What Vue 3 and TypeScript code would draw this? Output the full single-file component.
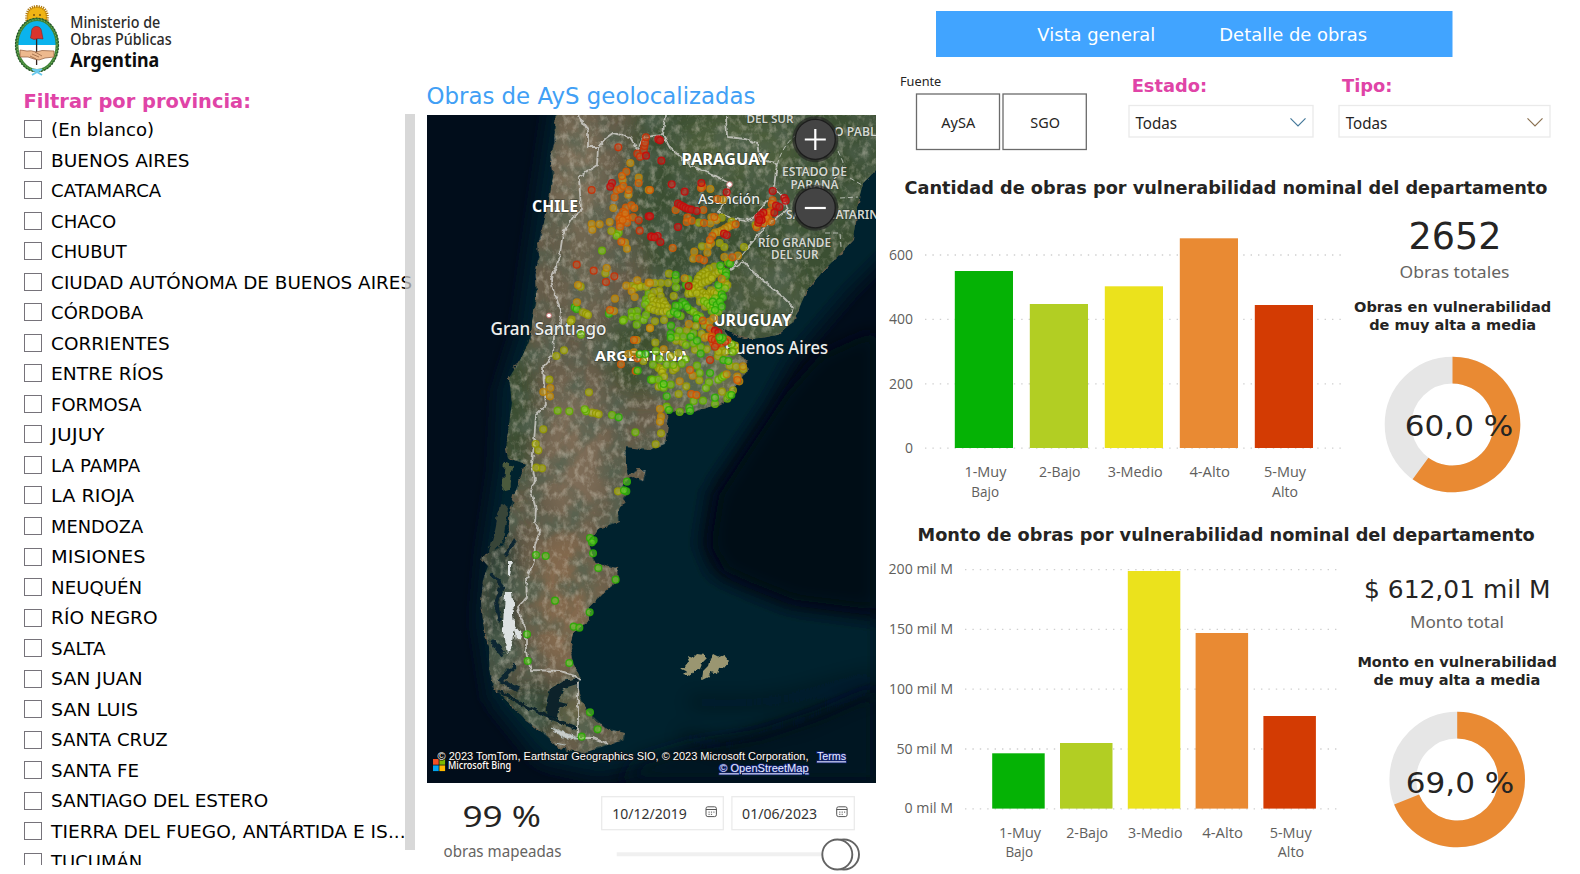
<script setup lang="ts">
import { h, type FunctionalComponent } from 'vue'

interface LabelProps { x: number; y: number; w: number; size: number }

// A single line of SVG text fitted to a known width.
const Label: FunctionalComponent<LabelProps> = (p, { slots }) =>
  h('text', { x: p.x, y: p.y, textLength: p.w, lengthAdjust: 'spacingAndGlyphs', 'font-size': p.size }, slots.default?.())
Label.props = ['x', 'y', 'w', 'size']

const provinces: { name: string; w: number }[] = [
  { name: '(En blanco)', w: 103 }, { name: 'BUENOS AIRES', w: 138.5 }, { name: 'CATAMARCA', w: 110 },
  { name: 'CHACO', w: 65 }, { name: 'CHUBUT', w: 75.5 }, { name: 'CIUDAD AUTÓNOMA DE BUENOS AIRES', w: 361 },
  { name: 'CÓRDOBA', w: 92 }, { name: 'CORRIENTES', w: 118.5 }, { name: 'ENTRE RÍOS', w: 112.5 },
  { name: 'FORMOSA', w: 90.5 }, { name: 'JUJUY', w: 53.5 }, { name: 'LA PAMPA', w: 89 }, { name: 'LA RIOJA', w: 83 },
  { name: 'MENDOZA', w: 92 }, { name: 'MISIONES', w: 94.5 }, { name: 'NEUQUÉN', w: 91 }, { name: 'RÍO NEGRO', w: 106.5 },
  { name: 'SALTA', w: 54.5 }, { name: 'SAN JUAN', w: 91.5 }, { name: 'SAN LUIS', w: 87 }, { name: 'SANTA CRUZ', w: 116.5 },
  { name: 'SANTA FE', w: 88 }, { name: 'SANTIAGO DEL ESTERO', w: 217 },
  { name: 'TIERRA DEL FUEGO, ANTÁRTIDA E IS...', w: 354.5 }, { name: 'TUCUMÁN', w: 91 },
]

type Tone = 'r' | 'v' | 'o' | 'a' | 'y' | 'l' | 'g'
interface Dot { x: number; y: number; tone: Tone }

// Each sector stores positions in thirds of a pixel from its origin, grouped by tone.
function sector(ox: number, oy: number, groups: Partial<Record<Tone, string>>): Dot[] {
  return (Object.keys(groups) as Tone[]).flatMap((tone) =>
    groups[tone]!.split(' ').map((pair) => {
      const [x, y] = pair.split(',').map(Number)
      return { x: ox + x / 3, y: oy + y / 3, tone }
    }),
  )
}

const dots: Dot[] = [
  ...sector(426, 110, {
    l: '578,368 572,377 528,422 668,551 660,568 668,575 657,583 668,598 633,603 617,606 617,620 633,620 594,629 591,632 653,630 632,644 660,615 465,674',
    g: '446,592 452,597 549,611',
    y: '556,363 538,490 464,530 617,528 638,525 627,533 643,530 660,530 470,607 480,611 486,615 437,629 434,634',
    a: '590,210 613,159 638,203 607,254 668,240 562,294 551,336 521,343 497,342 499,359 597,398 603,416 542,474 456,525 601,527 634,511 617,544 626,561 668,518 567,566 453,577 564,603 672,654',
    o: '601,185 588,198 638,219 572,241 583,237 592,228 608,240 566,262 600,293 616,286 625,294 592,305 585,318 597,320 605,325 621,322 603,338 580,326 582,340 582,350 586,395 552,600 590,330 598,310',
    v: '577,112 634,131 642,140 653,121 655,108 497,240 638,331 641,362 452,464 503,482 565,499 540,516 657,98 660,82',
    r: '660,137 558,219 553,230 668,319 675,380',
  }),
  ...sector(650, 110, {
    y: '147,338 215,323 245,335 156,409 209,399 223,411 282,411 317,345 193,470 178,476 167,484 158,490 150,497 144,506 165,500 175,495 185,500 195,492 205,485 225,515 232,525 140,517 133,526 126,535 118,541 115,551 125,550 135,540 145,530 155,520 165,515 175,512 185,505 150,541 158,548 168,552 177,550 183,541 192,547 200,550 178,565 168,562 150,560 140,550 165,590 150,575 57,491 54,519 33,519 15,519 28,542 12,546 32,558 5,560 10,570 20,575 30,578 40,573 45,583 52,592 35,590 22,588 8,585 0,595 12,600 25,604 38,605 50,603 71,558 42,630 15,634 137,648 110,662 165,645 155,672',
    l: '234,456 215,480 208,535 225,535 207,565 195,565 162,573 172,580 180,588 190,590 185,603 205,605 77,510 115,508 78,532 120,600 130,605 60,612 92,618 88,663 130,670 140,615 150,620',
    g: '240,461 211,467 228,486 228,497 205,525 215,553 219,562 188,575 200,585 210,575 215,590 195,600 77,495 108,525 97,576 105,583 88,588 77,587 112,592 72,605 82,612 63,647 62,672 140,625',
    a: '181,237 219,269 184,322 200,330 181,340 245,346 235,350 225,356 215,362 205,366 195,368 183,400 175,408 172,428 133,425 130,446 223,441 264,437 350,333 352,310 215,507 0,519 104,505 117,642 178,635 190,625 0,655',
    o: '157,230 153,234 202,267 0,240 77,300 160,300 112,323 110,336 125,332 162,339 193,321 257,343 187,378 180,390 68,414 148,446 162,451 247,442 368,271 365,282 345,312 355,318 349,325 340,340 364,335 320,352 360,305 158,632 180,655 190,668',
    r: '25,88 30,91 34,152 65,223 104,245 154,219 230,247 84,281 92,286 100,290 107,294 115,297 124,299 140,303 84,351 222,371 230,375 5,380 23,378 14,382 31,396 368,243 403,264 407,272 378,287 388,291 373,308 340,308 332,315 325,322 335,330 325,338 328,330 0,319 116,528 195,662 205,668',
  }),
  ...sector(426, 335, {
    y: '414,46 391,63 370,134 489,172 498,233 510,235 518,238 352,283 329,327 337,346 348,400 331,398 576,469 652,78',
    a: '373,159 352,171 372,184 632,15 607,57 624,52',
    o: '624,15 634,70 585,88 629,108',
    l: '395,227 430,229 480,229 476,223 558,240 628,292',
    g: '578,247 603,440 601,469 594,466 492,609 503,616 498,622 501,655 330,660 359,663 641,58 658,57 635,107 675,134',
  }),
  ...sector(650, 335, {
    y: '16,23 62,64 79,17 98,22 85,54 69,106 77,100 25,98 30,102 38,103 36,112 42,125 26,155 135,44 170,43 148,136 109,154 86,177 239,92 258,95 280,103 204,64 216,170 249,166 215,45 225,52 255,45 255,32 33,295 17,328 205,50',
    l: '80,5 100,5 18,48 108,30 29,72 107,73 95,86 50,89 70,90 9,89 8,134 26,134 35,152 62,149 41,158 130,25 152,36 141,92 149,114 177,142 168,159 131,198 159,197 195,207 50,215 89,231 205,134 216,127 222,122 232,191 238,180 245,28 248,50',
    g: '62,8 122,5 141,17 152,56 180,114 41,147 50,184 195,188 57,225 118,218 120,228 220,75 235,78 244,180',
    a: '41,43 128,122 89,139 230,118 279,94 262,125 268,139 30,222 33,245 30,260 165,8 175,5',
    o: '120,105 124,177 139,180 262,135 190,25 232,15 212,25 185,5',
    v: '180,75 185,12 195,15 205,18 200,28 225,20 195,35',
  }),
  ...sector(658, 338, { g: '188,6 194,0 184,-2' }),
  ...sector(426, 560, { g: '517,24 569,59 387,122 491,157 443,200 460,203 303,223 305,303 430,309 492,457 515,508 467,530' }),
]

interface Tick { text: string; y: number; x: number; w: number }
interface Bar { x: number; top: number; color: string }
interface Caption { text: string; x: number; y: number; w: number }
const tones = ['#05b205', '#b2ce23', '#ebe21c', '#e98a33', '#d33b03']

const countTicks: Tick[] = [
  { text: '600', y: 255, x: 889, w: 24 }, { text: '400', y: 319.4, x: 889, w: 24 },
  { text: '200', y: 383.8, x: 889, w: 24 }, { text: '0', y: 448.2, x: 905, w: 8 },
]
const countBars: Bar[] = [271, 304, 286.3, 238.3, 305].map((top, i) => ({ x: 954.8 + i * 75, top, color: tones[i] }))
const countCaptions: Caption[] = [
  { text: '1-Muy', x: 964.4, y: 477, w: 42 }, { text: 'Bajo', x: 971.3, y: 497, w: 27.7 },
  { text: '2-Bajo', x: 1039, y: 477, w: 41.5 }, { text: '3-Medio', x: 1107.7, y: 477, w: 55 },
  { text: '4-Alto', x: 1189.4, y: 477, w: 40.5 }, { text: '5-Muy', x: 1264, y: 477, w: 42 }, { text: 'Alto', x: 1272, y: 497, w: 26 },
]
const amountTicks: Tick[] = [
  { text: '200 mil M', y: 569.6, x: 888.5, w: 64.5 }, { text: '150 mil M', y: 629.4, x: 889, w: 64 },
  { text: '100 mil M', y: 689.2, x: 889, w: 64 }, { text: '50 mil M', y: 749, x: 896.5, w: 56.5 }, { text: '0 mil M', y: 808.8, x: 904.5, w: 48.5 },
]
const amountBars: Bar[] = [753.3, 743, 571, 633, 716].map((top, i) => ({ x: 992.2 + i * 67.8, top, color: tones[i] }))
const amountCaptions: Caption[] = [
  { text: '1-Muy', x: 999, y: 838, w: 42 }, { text: 'Bajo', x: 1005.4, y: 857, w: 27.7 },
  { text: '2-Bajo', x: 1066.2, y: 838, w: 42 }, { text: '3-Medio', x: 1128, y: 838, w: 54.5 },
  { text: '4-Alto', x: 1202.3, y: 838, w: 40.7 }, { text: '5-Muy', x: 1269.7, y: 838, w: 42 }, { text: 'Alto', x: 1277.8, y: 857, w: 26.3 },
]

// Ring segment from the top, clockwise, for a share between 0 and 1.
function arc(cx: number, cy: number, share: number, ro = 67.8, ri = 41): string {
  const a = share * Math.PI * 2
  const s = Math.sin(a)
  const c = -Math.cos(a)
  const big = share > 0.5 ? 1 : 0
  return `M${cx} ${cy - ro}A${ro} ${ro} 0 ${big} 1 ${cx + ro * s} ${cy + ro * c}L${cx + ri * s} ${cy + ri * c}A${ri} ${ri} 0 ${big} 0 ${cx} ${cy - ri}Z`
}

const land = 'M556 110L554 143L550 157L553 177L549 200L544 223L538 243L539 257L535 273L536 297L532 323L531 335L523 355L509 378L512 402L509 425L506 448L508 458L517 461L526 464L520 480L514 495L509 515L510 530L503 545L481 558L488 566L483 580L481 603L484 627L489 647L489 670L494 688L509 703L526 720L543 733L559 748L583 753L608 745L624 740L625 733L606 728L589 713L581 700L577 685L581 679L573 663L570 647L573 633L589 620L589 607L603 593L618 582L617 568L596 563L593 558L589 542L599 528L619 522L618 512L626 495L623 484L633 478L644 482L646 470L638 470L628 475L626 465L626 447L650 450L665 444L668 425L667 413L690 412L717 405L732 397L735 387L747 371L746 362L738 352L730 338L722 328L738 335L753 339L777 335L793 322L807 290L823 271L837 257L853 240L857 207L863 183L876 170L890 110Z'
const borders = [
  'M578 115L588 130L588 147L598 147L597 165L579 177L581 210L573 217L563 233L559 260L551 280L554 293L561 310L560 325L554 336L553 355L543 367L544 385L546 405L536 415L534 442L532 465L535 480L531 490L536 510L535 522L540 532L535 545L534 562L526 580L527 597L518 607L520 617L526 628L526 650L527 657L531 670L560 671L575 676L581 680',
  'M578 683L578 738L593 738L608 744',
  'M598 147L606 138L613 133L630 137L638 150L643 137L663 135L670 148L690 165L713 175L729 183L728 197L718 212L730 218L745 221L755 217L767 200',
  'M665 115L663 135', 'M726 115L727 137L745 139L757 143L760 160L777 163L774 187L783 197L787 210L764 228L740 257L730 270L744 262L756 275L783 297L793 307L790 318',
]
</script>

<template>
  <main class="dashboard">
    <aside class="side">
      <svg class="brand" width="427" height="114" viewBox="0 0 427 114">
        <g class="crest">
          <path d="M27 22Q25 7 37 6.5Q49 7 47 22Z" fill="#f0b414" />
          <path d="M27 21Q25 7 37 6.5Q49 7 47 21" fill="none" stroke="#ac7815" stroke-width="3" stroke-dasharray="1.2 1" />
          <circle cx="34" cy="15" r="1" fill="#76520f" /><circle cx="40" cy="15" r="1" fill="#76520f" />
          <ellipse cx="37" cy="45" rx="20.3" ry="26" fill="#fff" />
          <path d="M17 45A20 26 0 0 1 57 45Z" fill="#0bb3ed" />
          <ellipse cx="37" cy="45" rx="20.2" ry="25.6" fill="none" stroke="#3f8438" stroke-width="3.2" />
          <ellipse cx="37" cy="45" rx="21.5" ry="26.8" fill="none" stroke="#27512a" stroke-width="1.2" stroke-dasharray="1.8 1.4" />
          <ellipse cx="37" cy="45" rx="20" ry="25.4" fill="none" stroke="#8db95c" stroke-width="1" stroke-dasharray="1 2" />
          <path d="M36.6 37V65" stroke="#33211c" stroke-width="1.3" />
          <path d="M30.5 38L31.5 33Q31 27 36 26.4Q41 26.6 41.5 31L43 39L38 38.5L34 39.5Z" fill="#d9342c" stroke="#8f1c1b" stroke-width=".6" />
          <path d="M20 50L27 51Q31 50 36 52L42 50.5L54 51L54 57L45 58L39 60L34 59L28 57L20 57Z" fill="#edb98e" stroke="#8c5836" stroke-width=".7" />
          <path d="M32 54L39 57M35 52L42 56M30 56L36 59" stroke="#7b492b" stroke-width=".6" fill="none" />
          <path d="M32 69L42 75M42 69L32 75M33 70H41" stroke="#69c9ee" stroke-width="1.8" fill="none" />
        </g>
        <Label class="brand-text" :x="70.3" :y="28" :w="90" :size="16.4">Ministerio de</Label>
        <Label class="brand-text" :x="70.3" :y="45" :w="101.3" :size="16.4">Obras Públicas</Label>
        <Label class="brand-strong" :x="70.3" :y="66.7" :w="89" :size="19.5">Argentina</Label>
        <Label class="pink" :x="23.5" :y="107.7" :w="227.5" :size="20">Filtrar por provincia:</Label>
      </svg>
      <div class="list">
        <label v-for="p in provinces" :key="p.name" class="row">
          <span class="box"></span>
          <svg class="row-text" width="366" height="30" viewBox="0 0 366 30">
            <Label :x="-0.9" :y="21.7" :w="p.w" :size="17">{{ p.name }}</Label>
          </svg>
        </label>
        <span class="scrollbar"></span>
      </div>
    </aside>

    <section class="center">
      <svg class="map-title" width="449" height="115" viewBox="427 0 449 115">
        <Label class="blue" :x="426.5" :y="103.8" :w="329" :size="22.3">Obras de AyS geolocalizadas</Label>
      </svg>
      <svg class="map" width="449" height="668" viewBox="427 115 449 668">
        <defs>
          <clipPath id="landClip"><path :d="land" /></clipPath>
          <filter id="soft" x="-30%" y="-30%" width="160%" height="160%"><feGaussianBlur stdDeviation="11" /></filter>
          <filter id="softer" x="-30%" y="-30%" width="160%" height="160%"><feGaussianBlur stdDeviation="9" /></filter>
          <filter id="rough" x="-5%" y="-5%" width="110%" height="110%">
            <feTurbulence type="fractalNoise" baseFrequency=".12" numOctaves="3" seed="4" />
            <feDisplacementMap in="SourceGraphic" scale="7" xChannelSelector="R" yChannelSelector="G" />
          </filter>
          <filter id="roughSmall" x="-5%" y="-5%" width="110%" height="110%">
            <feTurbulence type="fractalNoise" baseFrequency=".2" numOctaves="2" seed="9" />
            <feDisplacementMap in="SourceGraphic" scale="4" xChannelSelector="R" yChannelSelector="G" />
          </filter>
          <filter id="darkGrain" x="0" y="0" width="100%" height="100%">
            <feTurbulence type="fractalNoise" baseFrequency=".035 .03" numOctaves="6" seed="11" />
            <feColorMatrix values="0 0 0 0 .08  0 0 0 0 .12  0 0 0 0 .08  2.6 0 0 0 -1" />
          </filter>
          <filter id="lightGrain" x="0" y="0" width="100%" height="100%">
            <feTurbulence type="fractalNoise" baseFrequency=".16 .12" numOctaves="4" seed="23" />
            <feColorMatrix values="0 0 0 0 .66  0 0 0 0 .62  0 0 0 0 .52  0 2.6 0 0 -1.2" />
          </filter>
        </defs>
        <rect x="427" y="115" width="449" height="668" fill="#010d1b" />
        <path d="M552 100L900 100L900 240L850 290L790 360L765 405L735 450L708 490L699 545L712 575L745 590L790 608L880 620L880 690L790 725L700 752L600 775L540 762L490 700L478 620L484 550L496 470L500 390L519 330L530 250Z" fill="#06232e" filter="url(#softer)" />
        <path d="M876 400V330L820 355L785 395L745 455L719 495L711 545L725 571L752 583L795 600L876 610Z" fill="#000914" filter="url(#softer)" />
        <path d="M876 690L820 715L760 735L690 745L640 760L620 783H876Z" fill="#031723" filter="url(#softer)" />
        <path d="M690 702Q760 706 800 695T876 675M680 735L725 748L776 726L800 722L850 700L876 690" fill="none" stroke="#01111d" stroke-width="4" filter="url(#softer)" opacity=".9" />
        <g filter="url(#rough)">
          <path :d="land" fill="#665c48" />
          <path d="M505 463L512 466L509 490L502 492Z" fill="#4c5a3d" />
          <path d="M500 504L508 508L503 542L488 556L495 530Z" fill="#394538" />
        </g>
        <path d="M680 668L685 667L689 662L687 656L693 658L697 654L704 655L707 659L702 664L700 669L694 672L691 676L683 674L686 671ZM710 659L713 654L719 657L724 655L729 661L724 667L719 668L717 674L711 672L708 677L702 680L703 671L708 666Z" fill="#9a9671" filter="url(#roughSmall)" />
        <g clip-path="url(#landClip)">
          <g filter="url(#soft)">
            <path d="M638 100H900V350H700L650 280L625 190Z" fill="#3a4f30" />
            <ellipse cx="735" cy="150" rx="60" ry="30" fill="#50603d" />
            <ellipse cx="765" cy="290" rx="38" ry="35" fill="#4b5a3a" />
            <ellipse cx="800" cy="205" rx="40" ry="30" fill="#3f5435" />
            <ellipse cx="580" cy="180" rx="22" ry="65" fill="#80725c" />
            <ellipse cx="585" cy="270" rx="20" ry="55" fill="#6e6651" />
            <ellipse cx="515" cy="410" rx="17" ry="80" fill="#344b2d" />
            <ellipse cx="640" cy="350" rx="35" ry="45" fill="#3d4f2e" />
            <ellipse cx="700" cy="370" rx="40" ry="35" fill="#68714f" />
            <ellipse cx="575" cy="450" rx="32" ry="75" fill="#7d6c57" />
            <ellipse cx="565" cy="600" rx="35" ry="70" fill="#83694e" />
            <ellipse cx="498" cy="600" rx="20" ry="85" fill="#2d4035" />
            <ellipse cx="532" cy="710" rx="32" ry="25" fill="#263b2c" />
            <ellipse cx="575" cy="715" rx="18" ry="16" fill="#6a6a48" />
          </g>
          <rect x="470" y="115" width="406" height="650" filter="url(#darkGrain)" opacity=".72" />
          <rect x="470" y="115" width="406" height="650" filter="url(#lightGrain)" opacity=".42" />
          <path d="M508 562L513 562L511 575L508 575ZM505 592L512 592L515 625L512 650L507 655L503 625ZM514 625L522 636L516 640Z" fill="#dde2e2" filter="url(#rough)" />
          <path d="M550 727L565 733L578 738L562 738ZM556 744L566 746" fill="#c8cdca" stroke="#aeb7b4" filter="url(#rough)" />
          <path d="M550 689L563 681L580 678L577 684L564 688L558 702L568 704L558 710L557 719L548 717L546 704Z" fill="#07222c" filter="url(#roughSmall)" />
          <path d="M496 690L520 703L550 718L576 728" fill="none" stroke="#07222c" stroke-width="3" filter="url(#rough)" />
          <path d="M490 573L502 586L496 602L500 622M504 655L492 640M515 665L500 680L518 690M506 555L515 540" fill="none" stroke="#0a2630" stroke-width="4" filter="url(#rough)" />
        </g>
        <g fill="none" stroke="#d3d2ce" stroke-width="1.8" opacity=".8" filter="url(#roughSmall)">
          <path v-for="b in borders" :key="b" :d="b" />
        </g>
        <path d="M777 165Q783 145 795 136M838 151L843 162L841 175M850 178L862 185M840 198L858 197M825 233L840 233L841 247" fill="none" stroke="#cfd3cd" stroke-dasharray="5 3" opacity=".8" />
        <g fill="#fff" stroke="#c27070"><circle cx="549" cy="315.5" r="2.4" /><circle cx="729.5" cy="184.5" r="2.8" /></g>
        <g class="country">
          <Label :x="532" :y="211.5" :w="46" :size="15.8">CHILE</Label>
          <Label :x="681.5" :y="165.3" :w="87.5" :size="15.8">PARAGUAY</Label>
          <Label :x="713.5" :y="326.3" :w="78" :size="15.8">URUGUAY</Label>
          <Label :x="595" :y="360.5" :w="93.5" :size="14.8">ARGENTINA</Label>
        </g>
        <g class="city">
          <Label :x="490.5" :y="335.3" :w="116" :size="18">Gran Santiago</Label>
          <Label :x="724.5" :y="354.3" :w="103.5" :size="18">Buenos Aires</Label>
          <Label :x="698" :y="204" :w="62" :size="15">Asunción</Label>
        </g>
        <g class="state">
          <Label :x="746.5" :y="122.5" :w="47" :size="11.5">DEL SUR</Label>
          <Label :x="834" :y="136" :w="52" :size="12">O PABLO</Label>
          <Label :x="782" :y="176.3" :w="65" :size="12">ESTADO DE</Label>
          <Label :x="790.5" :y="189" :w="48" :size="12">PARANÁ</Label>
          <Label :x="786" :y="219" :w="101" :size="12">SANTA CATARINA</Label>
          <Label :x="758" :y="247" :w="73" :size="12">RÍO GRANDE</Label>
          <Label :x="771" :y="259" :w="47.5" :size="12">DEL SUR</Label>
        </g>
        <circle v-for="(d, i) in dots" :key="i" :cx="d.x" :cy="d.y" r="3.4" :class="['dot', d.tone]" />
        <g class="zoom-button">
          <circle class="halo" cx="815.3" cy="139.3" r="23" /><circle cx="815.3" cy="139.3" r="20" />
          <path d="M804.8 139.5H825.8M815.3 129V150" />
          <circle class="halo" cx="815.3" cy="207.8" r="23" /><circle cx="815.3" cy="207.8" r="20" />
          <path d="M804.8 208H825.8" />
        </g>
        <g class="credits">
          <path d="M433 759h5.7v5.7h-5.7z" fill="#f25022" /><path d="M439.4 759h5.7v5.7h-5.7z" fill="#7fba00" />
          <path d="M433 765.4h5.7v5.7h-5.7z" fill="#00a4ef" /><path d="M439.4 765.4h5.7v5.7h-5.7z" fill="#ffb900" />
          <Label :x="437.5" :y="760.3" :w="371" :size="10.8">© 2023 TomTom, Earthstar Geographics SIO, © 2023 Microsoft Corporation,</Label>
          <Label class="bing" :x="448" :y="768.9" :w="63" :size="10">Microsoft Bing</Label>
          <Label class="link" :x="817" :y="760.3" :w="29" :size="10.8">Terms</Label>
          <Label class="link" :x="719.3" :y="772.3" :w="89.3" :size="10.8">© OpenStreetMap</Label>
        </g>
      </svg>
      <svg width="449" height="91" viewBox="427 783 449 91">
        <Label class="value light" :x="462.5" :y="826.5" :w="78.5" :size="29.5">99 %</Label>
        <Label class="muted" :x="443.5" :y="857" :w="118" :size="16.5">obras mapeadas</Label>
        <g fill="#fff" stroke="#ebebeb" stroke-width="1.3">
          <rect x="601.7" y="796.7" width="121.6" height="33" /><rect x="731.9" y="796.7" width="122.4" height="33" />
        </g>
        <Label class="date" :x="612.3" :y="819" :w="74.5" :size="15">10/12/2019</Label>
        <Label class="date" :x="742.1" :y="819" :w="75" :size="15">01/06/2023</Label>
        <g v-for="x in [705.5, 836.2]" :key="x" :transform="`translate(${x} 806.3)`" fill="none" stroke="#555" stroke-width="1">
          <rect x=".5" y=".5" width="10.4" height="9.8" rx="1.8" /><path d="M.5 3.2H11" />
          <path d="M3 5.8H9.5M3 8H7.5" stroke-dasharray="1.2 1.2" />
        </g>
        <path d="M616.7 854.2H826" stroke="#f0f0f0" stroke-width="4" />
        <g fill="#fff" stroke="#636363" stroke-width="1.9"><circle cx="844" cy="854.5" r="15" /><circle cx="837.3" cy="854.5" r="15" /></g>
      </svg>
    </section>

    <section class="right">
      <svg width="700" height="165" viewBox="880 0 700 165">
        <rect x="936" y="11" width="516.5" height="46" fill="#41a4ff" />
        <Label class="nav" :x="1037.3" :y="41" :w="118" :size="18">Vista general</Label>
        <Label class="nav" :x="1219.3" :y="41" :w="147.8" :size="18">Detalle de obras</Label>
        <Label class="dark" :x="900" :y="86" :w="41.3" :size="12.3">Fuente</Label>
        <g fill="#fff" stroke="#6b6b6b" stroke-width="1.3"><rect x="916.5" y="94" width="83" height="55.5" /><rect x="1003" y="94" width="83.3" height="55.5" /></g>
        <Label class="dark" :x="941.3" :y="128" :w="34" :size="15">AySA</Label>
        <Label class="dark" :x="1030.3" :y="128" :w="29.6" :size="15">SGO</Label>
        <Label class="pink" :x="1131.7" :y="92" :w="75.5" :size="17.3">Estado:</Label>
        <Label class="pink" :x="1342" :y="92" :w="50.5" :size="17.3">Tipo:</Label>
        <g fill="#fff" stroke="#eaeaea" stroke-width="1.3"><rect x="1129" y="105.5" width="184" height="31.5" /><rect x="1339" y="105.5" width="211" height="31.5" /></g>
        <Label class="dark" :x="1135.5" :y="129" :w="41.5" :size="16">Todas</Label>
        <Label class="dark" :x="1345.7" :y="129" :w="41.5" :size="16">Todas</Label>
        <path d="M1290.5 118.3L1298 125.8L1305.5 118.3" fill="none" stroke="#44789a" stroke-width="1.2" />
        <path d="M1527.5 118.3L1535 125.8L1542.5 118.3" fill="none" stroke="#8a7050" stroke-width="1.2" />
      </svg>
      <div class="panel">
        <svg width="465" height="345" viewBox="880 165 465 345">
          <Label class="heading" :x="904.5" :y="193.7" :w="643" :size="17.5">Cantidad de obras por vulnerabilidad nominal del departamento</Label>
          <path v-for="t in countTicks" :key="t.y" class="grid" :d="`M925 ${t.y}H1345`" />
          <Label v-for="t in countTicks" :key="t.text" class="axis" :x="t.x" :y="t.y + 5" :w="t.w" :size="15.3">{{ t.text }}</Label>
          <rect v-for="b in countBars" :key="b.x" :x="b.x" :y="b.top" width="58.2" :height="448 - b.top" :fill="b.color" />
          <Label v-for="c in countCaptions" :key="c.x" class="axis" :x="c.x" :y="c.y" :w="c.w" :size="15.3">{{ c.text }}</Label>
        </svg>
        <svg width="235" height="345" viewBox="1345 165 235 345">
          <Label class="value" :x="1408.5" :y="249" :w="93" :size="37.3">2652</Label>
          <Label class="muted" :x="1399.5" :y="278" :w="110" :size="16.8">Obras totales</Label>
          <Label class="sub" :x="1354" :y="312" :w="197.3" :size="14.8">Obras en vulnerabilidad</Label>
          <Label class="sub" :x="1369.2" :y="330" :w="167" :size="14.8">de muy alta a media</Label>
          <circle cx="1452.5" cy="424.5" r="54.4" fill="none" stroke="#e6e6e6" stroke-width="26.8" />
          <path :d="arc(1452.5, 424.5, 0.6)" fill="#e98a33" />
          <Label class="value" :x="1404.8" :y="435.7" :w="108.5" :size="28.8">60,0 %</Label>
        </svg>
      </div>
      <div class="panel">
        <svg width="465" height="364" viewBox="880 510 465 364">
          <Label class="heading" :x="917.5" :y="541" :w="617.3" :size="17.5">Monto de obras por vulnerabilidad nominal del departamento</Label>
          <path v-for="t in amountTicks" :key="t.y" class="grid" :d="`M965 ${t.y}H1341`" />
          <Label v-for="t in amountTicks" :key="t.text" class="axis" :x="t.x" :y="t.y + 4.5" :w="t.w" :size="15.3">{{ t.text }}</Label>
          <rect v-for="b in amountBars" :key="b.x" :x="b.x" :y="b.top" width="52.5" :height="808.6 - b.top" :fill="b.color" />
          <Label v-for="c in amountCaptions" :key="c.x" class="axis" :x="c.x" :y="c.y" :w="c.w" :size="15.3">{{ c.text }}</Label>
        </svg>
        <svg width="235" height="364" viewBox="1345 510 235 364">
          <Label class="value" :x="1364" :y="598" :w="186.5" :size="24.3">$ 612,01 mil M</Label>
          <Label class="muted" :x="1410" :y="627.7" :w="94" :size="16.8">Monto total</Label>
          <Label class="sub" :x="1357.4" :y="667" :w="199.6" :size="14.8">Monto en vulnerabilidad</Label>
          <Label class="sub" :x="1373.4" :y="685" :w="167" :size="14.8">de muy alta a media</Label>
          <circle cx="1457.2" cy="779.5" r="54.4" fill="none" stroke="#e6e6e6" stroke-width="26.8" />
          <path :d="arc(1457.2, 779.5, 0.69)" fill="#e98a33" />
          <Label class="value" :x="1405.8" :y="793.3" :w="108.5" :size="28.8">69,0 %</Label>
        </svg>
      </div>
    </section>
  </main>
</template>

<style>
body { margin: 0; background: #fff; overflow: hidden; }
</style>

<style scoped>
.dashboard {
  display: grid;
  grid-template-columns: 427px 453px 700px;
  width: 1580px;
  height: 874px;
  overflow: hidden;
  background: #fff;
  font-family: 'Noto Sans', 'Open Sans', sans-serif;
}
svg { display: block; flex: none; }
.side, .center, .right { display: flex; flex-direction: column; min-width: 0; }
.brand-text { fill: #2b2b2b; font-weight: 500; }
.brand-strong { fill: #0d0d0d; font-weight: 700; }
.pink { fill: #e044a7; font-family: 'DejaVu Sans', sans-serif; font-weight: 700; }
.blue { fill: #419ff5; font-family: 'DejaVu Sans', sans-serif; }
.list { position: relative; height: 751px; overflow: hidden; }
.row { display: flex; align-items: flex-start; gap: 10px; height: 30.53px; padding-left: 24px; }
.box { box-sizing: border-box; width: 18px; height: 18px; margin-top: 6.3px; border: 1px solid #76737a; background: #fff; }
.row-text { fill: #000; font-family: 'DejaVu Sans', sans-serif; overflow: visible; }
.scrollbar { position: absolute; left: 405px; top: 0; width: 9.6px; height: 735.7px; background: rgba(203, 203, 203, 0.75); }
.country { fill: #fff; font-weight: 700; paint-order: stroke; stroke: rgba(20, 25, 20, 0.45); stroke-width: 1.5px; }
.city { fill: #eceeee; font-weight: 500; paint-order: stroke; stroke: rgba(20, 25, 20, 0.5); stroke-width: 1.5px; }
.state { fill: #d3d6d0; font-weight: 600; paint-order: stroke; stroke: rgba(20, 25, 20, 0.4); stroke-width: 1.2px; }
.dot { stroke-width: 1.3px; fill-opacity: 0.6; stroke-opacity: 0.9; }
.dot.r { fill: #c5281f; stroke: #c40c0c; }
.dot.v { fill: #c8562a; stroke: #c92f06; }
.dot.o { fill: #d67d20; stroke: #cf5602; }
.dot.a { fill: #cfa326; stroke: #b87e04; }
.dot.y { fill: #bdc123; stroke: #929702; }
.dot.l { fill: #90d428; stroke: #63ab00; }
.dot.g { fill: #68d42c; stroke: #2bab04; }
.zoom-button circle { fill: #444; stroke: #1d1d1d; stroke-width: 1.3px; }
.zoom-button .halo { fill: rgba(35, 35, 35, 0.65); stroke: none; }
.zoom-button path { fill: none; stroke: #fff; stroke-width: 2.2px; }
.credits { font-family: 'Liberation Sans', Arial, sans-serif; }
.credits text { fill: #fff; paint-order: stroke; stroke: #101010; stroke-width: 1.6px; }
.credits .bing { font-family: 'Noto Sans', sans-serif; font-weight: 500; }
.credits .link { fill: #e8ecff; stroke: #16257c; text-decoration: underline; }
.value { fill: #252423; font-family: 'DejaVu Sans', sans-serif; }
.value.light { font-family: 'Noto Sans', sans-serif; }
.muted { fill: #666462; }
.date { fill: #333; }
.dark { fill: #252423; }
.nav { fill: #fff; font-family: 'DejaVu Sans', sans-serif; }
.panel { display: flex; }
.panel svg:first-child { overflow: visible; }
.heading, .sub { fill: #252423; font-family: 'DejaVu Sans', sans-serif; font-weight: 700; }
.axis { fill: #605e5c; font-family: 'Open Sans', 'Noto Sans', sans-serif; }
.grid { fill: none; stroke: #cfcfcf; stroke-width: 1.3px; stroke-dasharray: 1.4 6; }
</style>
